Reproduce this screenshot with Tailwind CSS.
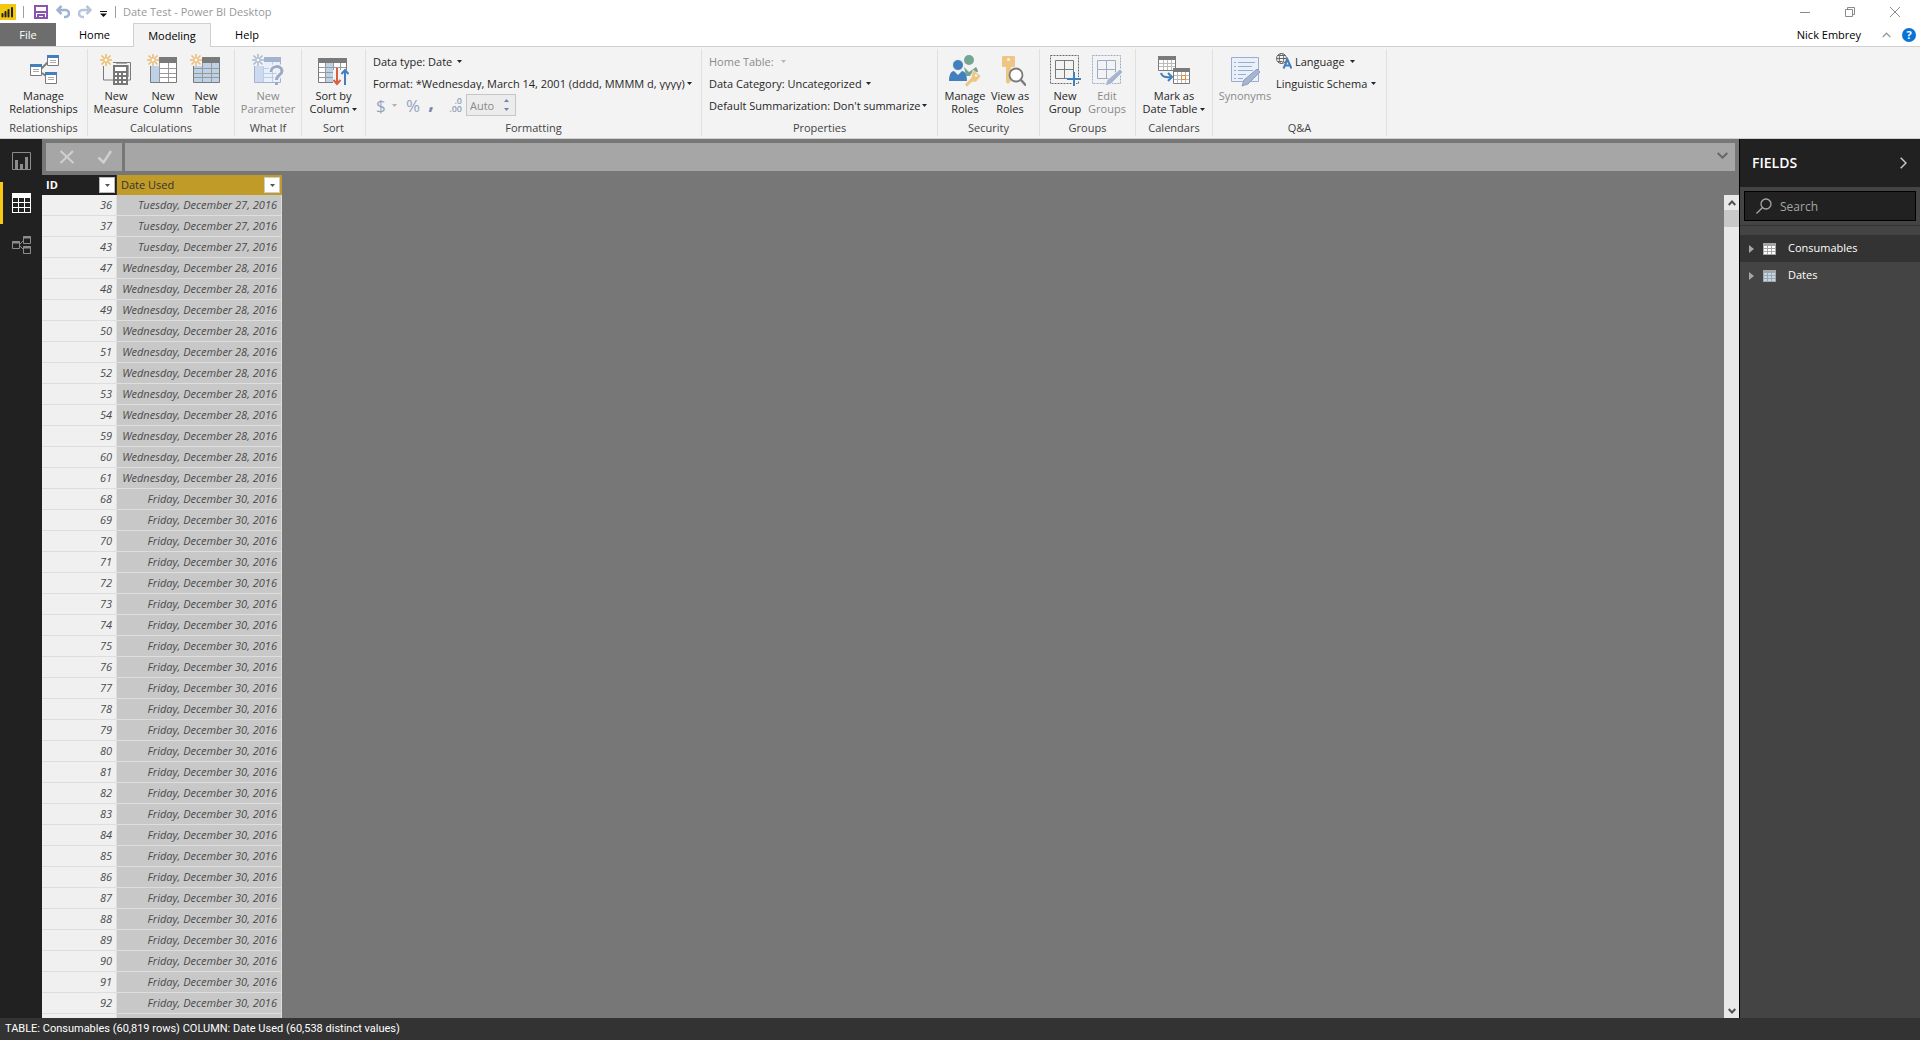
<!DOCTYPE html>
<html lang="en">
<head>
<meta charset="utf-8">
<title>Date Test - Power BI Desktop</title>
<script src="https://cdn.jsdelivr.net/npm/@tailwindcss/browser@4"></script>
</head>
<body class="flex h-screen flex-col overflow-hidden bg-white font-['Open_Sans','Noto_Sans',sans-serif] text-[11px] leading-[13px] text-[#262626]">

<svg class="hidden" aria-hidden="true">
  <defs>
    <symbol id="caret" viewBox="0 0 5 3"><path d="M0 0h5L2.500 3z" fill="currentColor"/></symbol>
    <symbol id="spark" viewBox="0 0 12 12"><path d="M6 0v12M0 6h12M1.500 1.500l9 9M10.500 1.500l-9 9" stroke="currentColor" stroke-width="1.500" fill="none"/><circle cx="6" cy="6" r="2" fill="#fff" stroke="currentColor"/></symbol>
  </defs>
</svg>

<!-- Title bar -->
<header class="flex h-[23px] shrink-0 items-center">
  <svg class="h-4 w-4" viewBox="0 0 16 16"><path d="M0 0h16v16H0z" fill="#f2c811"/><path d="M2.500 10v2.500M5.500 8v4.500M8.500 6v6.500M12 4v8.500" stroke="#222" stroke-width="2" stroke-linecap="round"/></svg>
  <span class="ml-[7px] h-3 w-px bg-[#a0a0a0]"></span>
  <button class="ml-[10px]" aria-label="Save"><svg class="h-[14px] w-[14px]" viewBox="0 0 14 14"><path d="M1 1h12v12H1z" fill="#fff" stroke="#8a55b0" stroke-width="2"/><path d="M2 7h10M4 13v-3h6v3" stroke="#8a55b0" stroke-width="2" fill="none"/></svg></button>
  <button class="ml-2" aria-label="Undo"><svg class="h-[14px] w-[14px]" viewBox="0 0 14 14" fill="none" stroke="#9db3d1" stroke-width="2.500"><path d="M5.500 1L1.500 5l4 4M2 5h7.500a3.500 3.500 0 0 1 0 7H8"/></svg></button>
  <button class="ml-2" aria-label="Redo"><svg class="h-[14px] w-[14px]" viewBox="0 0 14 14" fill="none" stroke="#b4c6d8" stroke-width="2.500"><path d="M8.500 1l4 4-4 4M12 5H4.500a3.500 3.500 0 0 0 0 7H6"/></svg></button>
  <button class="ml-2" aria-label="Customize toolbar"><svg class="mt-1 h-[6px] w-[7px]" viewBox="0 0 7 6"><path d="M0 0h7v1H0zM0 2.500h7L3.500 6z" fill="#111"/></svg></button>
  <span class="ml-2 h-3 w-px bg-[#a0a0a0]"></span>
  <h1 class="ml-[7px] text-[#999]">Date Test - Power BI Desktop</h1>
  <div class="ml-auto flex items-center gap-[35px] pr-5 text-[#8a8a8a]">
    <button aria-label="Minimize"><svg class="h-[10px] w-[10px]" viewBox="0 0 10 10"><path d="M0 5.500h10" stroke="currentColor"/></svg></button>
    <button aria-label="Restore"><svg class="h-[10px] w-[10px]" viewBox="0 0 10 10" fill="none" stroke="currentColor"><path d="M.5 2.500h7v7h-7zM2.500 2.500v-2h7v7h-2"/></svg></button>
    <button aria-label="Close"><svg class="h-[10px] w-[10px]" viewBox="0 0 10 10"><path d="M0 0l10 10M10 0L0 10" stroke="currentColor"/></svg></button>
  </div>
</header>

<!-- Ribbon tabs -->
<nav class="flex h-[24px] shrink-0 border-b border-[#d0d0d0] text-black">
  <button class="w-14 bg-[#6d6d6d] text-white">File</button>
  <button class="w-[77px]">Home</button>
  <button class="-mb-px h-[24px] w-[78px] border border-b-0 border-[#d0d0d0] bg-[#f3f3f3]">Modeling</button>
  <button class="w-[72px]">Help</button>
  <div class="ml-auto flex items-center pr-1">
    <span>Nick Embrey</span>
    <button class="ml-[21px]" aria-label="Collapse ribbon"><svg class="h-[6px] w-[9px]" viewBox="0 0 9 6"><path d="M.7 5L4.500 1.200 8.300 5" fill="none" stroke="#999" stroke-width="1.300"/></svg></button>
    <button class="ml-[11px] flex h-[14px] w-[14px] items-center justify-center rounded-full bg-[#0a74d6] text-[11px] font-bold text-white" aria-label="Help">?</button>
  </div>
</nav>

<!-- Ribbon -->
<section class="flex h-[92px] shrink-0 border-b border-[#d0d0d0] bg-[#f3f3f3]" aria-label="Modeling ribbon">

  <div class="my-[2px] flex w-[88px] flex-col border-r border-[#e0e0e0]">
    <div class="flex grow justify-center pt-1">
      <button class="flex flex-col items-center">
        <svg class="h-9 w-8" viewBox="0 0 32 36"><path d="M13 16l7-7M14 20l8 6" stroke="#7a7a7a" stroke-width="1.800"/><g fill="#fff" stroke="#7a7a7a"><path d="M19.500 3.500h11v9h-11zM2.500 12.500h11v10h-11zM17.500 20.500h11v10h-11z"/></g><path d="M19 2h12v3H19zM2 11h12v3H2zM17 19h12v3H17z" fill="#4180bd"/><path d="M22 7.500h6M22 9.500h6M5 16.500h6M5 18.500h6M20 24.500h6M20 26.500h6" stroke="#aaa"/></svg>
        <span>Manage<br>Relationships</span>
      </button>
    </div>
    <h2 class="h-[15px] text-center text-[#444]">Relationships</h2>
  </div>

  <div class="my-[2px] flex w-[147px] flex-col border-r border-[#e0e0e0]">
    <div class="flex grow pt-1 pl-1">
      <button class="flex w-12 flex-col items-center">
        <svg class="h-9 w-8" viewBox="0 0 32 36"><path d="M3.500 13v14h11M13 9.500h17.500V27H28" fill="none" stroke="#7a7a7a"/><path d="M16 10.500h11M28.500 12v12" stroke="#aaa"/><path d="M13 12h15v20H13z" fill="#777"/><path d="M15 14h11v4H15z" fill="#fff"/><path d="M15 20h2v2h-2zM19 20h2v2h-2zM23 20h3v2h-3zM15 24h2v2h-2zM19 24h2v2h-2zM23 24h3v2h-3zM15 28h2v2h-2zM19 28h2v2h-2zM23 28h3v2h-3z" fill="#fff"/><use href="#spark" x="0" y="1" width="12" height="12" color="#ecbc68"/></svg>
        <span>New<br>Measure</span>
      </button>
      <button class="flex w-[46px] flex-col items-center">
        <svg class="h-9 w-8" viewBox="0 0 32 36"><path d="M3.500 6.500h26v23h-26z" fill="#fff" stroke="#7a7a7a"/><path d="M4 10h8v19H4z" fill="#bdd2e6"/><path d="M3 4h27v6H3z" fill="#7a7a7a"/><path d="M12.500 10v19M21.500 10v19M12 15.500h17M12 20.500h17M12 24.500h17" stroke="#999"/><path d="M0 1h12v12H0z" fill="#f3f3f3"/><use href="#spark" x="0" y="1" width="12" height="12" color="#ecbc78"/></svg>
        <span>New<br>Column</span>
      </button>
      <button class="flex w-10 flex-col items-center">
        <svg class="h-9 w-8" viewBox="0 0 32 36"><path d="M3.500 6.500h26v23h-26z" fill="#bdd2e6" stroke="#7a7a7a"/><path d="M3 4h27v6H3z" fill="#7a7a7a"/><path d="M12.500 10v19M21.500 10v19M4 15.500h25M4 20.500h25M4 24.500h25" stroke="#999"/><path d="M0 1h12v12H0z" fill="#f3f3f3"/><use href="#spark" x="0" y="1" width="12" height="12" color="#ecbc78"/></svg>
        <span>New<br>Table</span>
      </button>
    </div>
    <h2 class="h-[15px] text-center text-[#444]">Calculations</h2>
  </div>

  <div class="my-[2px] flex w-[67px] flex-col border-r border-[#e0e0e0]">
    <div class="flex grow justify-center pt-1">
      <button class="flex flex-col items-center text-[#8a8a8a]" disabled>
        <svg class="h-9 w-8" viewBox="0 0 32 36"><path d="M2.500 6.500h26v23h-26z" fill="#e8f1fb" stroke="#a3b3cf"/><path d="M3 10h8v19H3z" fill="#cbdaf0"/><path d="M2 4h27v5H2z" fill="#a3b3cf"/><path d="M11.500 9v20M20.500 9v20M11 15.500h17M11 20.500h17M11 24.500h17" stroke="#c0cde0"/><path d="M0 1h12v12H0z" fill="#f3f3f3"/><use href="#spark" x="0" y="1" width="12" height="12" color="#a9b8d2"/><path d="M19 19c0-7 11-7 11-1 0 4-5.500 4-5.500 9" fill="none" stroke="#f3f3f3" stroke-width="6"/><path d="M19 19c0-7 11-7 11-1 0 4-5.500 4-5.500 9" fill="none" stroke="#9baac8" stroke-width="3"/><path d="M23 29h3v3h-3z" fill="#9baac8"/></svg>
        <span>New<br>Parameter</span>
      </button>
    </div>
    <h2 class="h-[15px] text-center text-[#444]">What If</h2>
  </div>

  <div class="my-[2px] flex w-16 flex-col border-r border-[#e0e0e0]">
    <div class="flex grow justify-center pt-1">
      <button class="flex flex-col items-center">
        <svg class="h-9 w-8" viewBox="0 0 32 36"><path d="M1.500 6.500h28v23h-28z" fill="#fff" stroke="#7a7a7a"/><path d="M9 10h7v19H9z" fill="#bdd2e6"/><path d="M1 5h29v5H1z" fill="#7a7a7a"/><path d="M8.500 10v19M16.500 10v19M23.500 10v19M2 14.500h27M2 19.500h27M2 24.500h27" stroke="#999"/><path d="M16 17h16v16H16z" fill="#f3f3f3"/><path d="M20 15v16M16.500 27l3.500 4 3.500-4" fill="none" stroke="#d5603f" stroke-width="2"/><path d="M28 32V17M24.500 21l3.500-4 3.500 4" fill="none" stroke="#4180bd" stroke-width="2"/></svg>
        <span class="whitespace-nowrap">Sort by<br>Column <svg class="mb-[2px] inline h-[3px] w-[5px]"><use href="#caret"/></svg></span>
      </button>
    </div>
    <h2 class="h-[15px] text-center text-[#444]">Sort</h2>
  </div>

  <div class="my-[2px] flex w-[336px] flex-col border-r border-[#e0e0e0]">
    <div class="flex grow flex-col pt-px pl-[7px]">
      <div class="flex h-[22px] items-center"><label for="dtype">Data type:&nbsp;</label><select id="dtype" class="appearance-none"><option>Date</option></select><svg class="ml-1 h-[3px] w-[5px]"><use href="#caret"/></svg></div>
      <div class="flex h-[22px] items-center"><label for="fmt">Format:&nbsp;</label><select id="fmt" class="appearance-none"><option>*Wednesday, March 14, 2001 (dddd, MMMM d, yyyy)</option></select><svg class="ml-px h-[3px] w-[5px]"><use href="#caret"/></svg></div>
      <div class="flex h-[22px] items-center text-[#93a3c0]">
        <button class="flex w-7 items-center gap-[6px] pl-[3px] text-[17px]" aria-label="Currency format" disabled>$<svg class="h-[3px] w-[5px] shrink-0 text-[#b0b0b0]"><use href="#caret"/></svg></button>
        <button class="w-6 text-[17px]" aria-label="Percentage format" disabled>%</button>
        <button class="w-3 pb-2 text-[20px] font-bold text-[#7488ad]" aria-label="Thousands separator" disabled>,</button>
        <label for="dec" class="ml-[9px] flex w-4 flex-col items-end text-[9px] leading-[8px] font-semibold text-[#909fb8]"><span>.0</span><span>.00</span></label>
        <div class="ml-1 flex h-[22px] w-[50px] items-center border border-[#c6c6c6] bg-[#ececec] pr-[6px]">
          <input id="dec" class="w-9 min-w-0 grow pl-[3px] text-[11px] text-[#8a8a8a]" value="Auto" disabled>
          <div class="flex flex-col gap-[6px] text-[#6f86ac]"><button aria-label="More decimals" disabled><svg class="block h-[3px] w-[5px] rotate-180"><use href="#caret"/></svg></button><button aria-label="Fewer decimals" disabled><svg class="block h-[3px] w-[5px]"><use href="#caret"/></svg></button></div>
        </div>
      </div>
    </div>
    <h2 class="h-[15px] text-center text-[#444]">Formatting</h2>
  </div>

  <div class="my-[2px] flex w-[236px] flex-col border-r border-[#e0e0e0]">
    <div class="flex grow flex-col pt-px pl-[7px]">
      <div class="flex h-[22px] items-center text-[#8a8a8a]"><label for="home">Home Table:</label><select id="home" class="w-[7px] appearance-none" disabled><option></option></select><svg class="h-[3px] w-[5px] text-[#b5b5b5]"><use href="#caret"/></svg></div>
      <div class="flex h-[22px] items-center"><label for="cat">Data Category:&nbsp;</label><select id="cat" class="appearance-none"><option>Uncategorized</option></select><svg class="ml-1 h-[3px] w-[5px]"><use href="#caret"/></svg></div>
      <div class="flex h-[22px] items-center"><label for="sum">Default Summarization:&nbsp;</label><select id="sum" class="appearance-none"><option>Don't summarize</option></select><svg class="ml-px h-[3px] w-[5px]"><use href="#caret"/></svg></div>
    </div>
    <h2 class="h-[15px] text-center text-[#444]">Properties</h2>
  </div>

  <div class="my-[2px] flex w-[102px] flex-col border-r border-[#e0e0e0]">
    <div class="flex grow pt-1 pl-1">
      <button class="flex w-[46px] flex-col items-center">
        <svg class="h-9 w-8" viewBox="0 0 32 36"><circle cx="20" cy="7" r="5" fill="#72a592"/><path d="M15 14l5 5 7-5q2 2 2 5l-6 1-2 3h-4z" fill="#72a592"/><path d="M18 13l3 4 3-4z" fill="#f3f3f3"/><circle cx="9" cy="12" r="5.500" fill="#4180bd" stroke="#f3f3f3"/><path d="M0 28c0-6 2-10 5-10l4 4 4-4c3 0 5 4 5 10z" fill="#4180bd"/><path d="M24 17l8 6-5 6h-4l-5 5-2-2v-1l6-6z" fill="#eec682" stroke="#f3f3f3" stroke-width=".6"/><circle cx="27" cy="22.500" r="1.300" fill="#f3f3f3"/></svg>
        <span>Manage<br>Roles</span>
      </button>
      <button class="flex w-11 flex-col items-center">
        <svg class="h-9 w-8" viewBox="0 0 32 36"><path d="M9 3h11q1 0 1 1v9q0 1-1 1h-3v14l-3 3-2-2V14H9q-1 0-1-1V4q0-1 1-1z" fill="#eec682"/><circle cx="14.500" cy="6.500" r="1.500" fill="#f3f3f3"/><circle cx="22" cy="22" r="6.500" fill="#fff" stroke="#7a7a7a" stroke-width="1.800"/><path d="M26.500 26.500l5.500 6" stroke="#7a7a7a" stroke-width="2.500"/></svg>
        <span class="whitespace-nowrap">View as<br>Roles</span>
      </button>
    </div>
    <h2 class="h-[15px] text-center text-[#444]">Security</h2>
  </div>

  <div class="my-[2px] flex w-24 flex-col border-r border-[#e0e0e0]">
    <div class="flex grow pt-1 pl-1">
      <button class="flex w-[42px] flex-col items-center">
        <svg class="h-9 w-8" viewBox="0 0 32 36"><path d="M1.500 2.500h28v28h-28z" fill="none" stroke="#6a6a6a" stroke-dasharray="2 1"/><path d="M6.500 7.500h18v18h-18zM15.500 7.500v18M6.500 16.500h18" fill="none" stroke="#7a7a7a"/><path d="M23 19h4v14h-4zM18 24h13v4H18z" fill="#f3f3f3"/><path d="M25 19v14M18 26h14" stroke="#4180bd" stroke-width="2"/></svg>
        <span>New<br>Group</span>
      </button>
      <button class="flex w-[42px] flex-col items-center text-[#8a8a8a]" disabled>
        <svg class="h-9 w-8" viewBox="0 0 32 36"><path d="M1.500 2.500h28v28h-28z" fill="none" stroke="#9dadc9" stroke-dasharray="2 1"/><path d="M6.500 7.500h18v18h-18zM15.500 7.500v18M6.500 16.500h18" fill="none" stroke="#9dadc9"/><path d="M14 33l2-6 13-11 3 3-12 12z" fill="#a6b5d0" stroke="#f3f3f3"/></svg>
        <span>Edit<br>Groups</span>
      </button>
    </div>
    <h2 class="h-[15px] text-center text-[#444]">Groups</h2>
  </div>

  <div class="my-[2px] flex w-[77px] flex-col border-r border-[#e0e0e0]">
    <div class="flex grow justify-center pt-1">
      <button class="flex flex-col items-center">
        <svg class="h-9 w-8" viewBox="0 0 32 36"><path d="M.5 4.500h17v13H.5zM15.500 17.500h16v13h-16z" fill="#fff" stroke="#7a7a7a"/><path d="M0 3h18v4H0zM15 15h17v4H15z" fill="#7a7a7a"/><path d="M5.500 7v10M9.500 7v10M13.500 7v10M1 10.500h16M1 13.500h16M19.500 19v11M23.500 19v11M27.500 19v11M16 22.500h15M16 26.500h15" stroke="#bbb"/><path d="M23.500 22.500h4v4h-4z" fill="#fff" stroke="#e8833a"/><path d="M3 20c1 4 5 5 11 4M10 20l4 4-4 4" fill="none" stroke="#4180bd" stroke-width="2"/></svg>
        <span class="whitespace-nowrap">Mark as<br>Date Table <svg class="mb-[2px] inline h-[3px] w-[5px]"><use href="#caret"/></svg></span>
      </button>
    </div>
    <h2 class="h-[15px] text-center text-[#444]">Calendars</h2>
  </div>

  <div class="my-[2px] flex w-[174px] flex-col border-r border-[#e0e0e0]">
    <div class="flex grow pl-1">
      <button class="flex w-[56px] flex-col items-center pt-1 text-[#8a8a8a]" disabled>
        <svg class="h-9 w-8" viewBox="0 0 32 36"><path d="M2.500 4.500h27v24h-27z" fill="#e8f1fb" stroke="#9dadc9"/><path d="M5 9.500h2M9 9.500h17M5 13.500h2M9 13.500h14M5 17.500h2M9 17.500h15M5 21.500h2M9 21.500h8M5 25.500h2M9 25.500h5" stroke="#9dadc9"/><path d="M13 33l2-6 13-11 3 3-12 12z" fill="#a6b5d0" stroke="#8d9dbb"/></svg>
        <span>Synonyms</span>
      </button>
      <div class="flex flex-col pt-px pl-[3px]">
        <button class="flex h-[22px] items-center gap-[3px]"><svg class="h-4 w-4" viewBox="0 0 16 16"><g fill="none" stroke="#666"><circle cx="5.500" cy="5.500" r="5"/><ellipse cx="5.500" cy="5.500" rx="2.200" ry="5"/><path d="M.5 5.500h10M1.500 2.500h8M1.500 8.500h5"/></g><path d="M7.500 15.500L11.500 6.500l4 9M9 12.500h5" fill="none" stroke="#4180bd" stroke-width="2"/></svg>Language <svg class="ml-[2px] h-[3px] w-[5px]"><use href="#caret"/></svg></button>
        <button class="flex h-[22px] items-center gap-1 whitespace-nowrap">Linguistic Schema <svg class="h-[3px] w-[5px]"><use href="#caret"/></svg></button>
      </div>
    </div>
    <h2 class="h-[15px] text-center text-[#444]">Q&amp;A</h2>
  </div>
</section>

<!-- Workspace -->
<main class="flex min-h-0 grow">
  <nav class="flex w-[42px] shrink-0 flex-col bg-[#212121] pt-px" aria-label="Views">
    <button class="flex h-[42px] items-center pl-3" aria-label="Report"><svg class="h-[19px] w-[19px]" viewBox="0 0 19 19"><path d="M.5.500h18v17H.5z" fill="none" stroke="#8c8c8c"/><path d="M3 8h3v9H3zM8 12h3v5H8zM13 5h3v12h-3z" fill="#8c8c8c"/></svg></button>
    <button class="flex h-[42px] items-center border-l-[3px] border-[#f8c813] pl-[9px]" aria-label="Data"><svg class="h-5 w-[19px]" viewBox="0 0 19 20"><path d="M0 0h19v20H0z" fill="#fff"/><path d="M1 5h5v4H1zM7 5h5v4H7zM13 5h5v4h-5zM1 10h5v4H1zM7 10h5v4H7zM13 10h5v4h-5zM1 15h5v4H1zM7 15h5v4H7zM13 15h5v4h-5z" fill="#212121"/></svg></button>
    <button class="flex h-[42px] items-center pl-3" aria-label="Relationships"><svg class="h-[19px] w-[19px]" viewBox="0 0 19 19" fill="none" stroke="#8c8c8c"><path d="M.5 5.500h7v7h-7zM11.500.500h7v7h-7zM11.500 10.500h7v7h-7zM8 8l3-3M8 10l3 3"/><path d="M0 6.500h8M11 1.500h8M11 11.500h8" stroke-width="2"/></svg></button>
  </nav>

  <section class="flex min-w-0 grow flex-col bg-[#777]">
    <div class="flex gap-[3px] pt-1 pr-1 pl-1">
      <div class="flex h-7 w-[76px] shrink-0 items-center gap-[22px] bg-[#a6a6a6] pl-[13px]">
        <button aria-label="Cancel"><svg class="h-[14px] w-4" viewBox="0 0 16 14"><path d="M1.500 1l13 12M14 1L1.500 13" stroke="#cfcfcf" stroke-width="2.200"/></svg></button>
        <button aria-label="Commit"><svg class="h-[14px] w-4" viewBox="0 0 16 14"><path d="M1.500 7.500l5 5L14 1" fill="none" stroke="#cfcfcf" stroke-width="2.500"/></svg></button>
      </div>
      <div class="flex h-7 grow items-center bg-[#a6a6a6] pr-[7px]">
        <input class="h-full min-w-0 grow px-2 outline-none" aria-label="Formula">
        <button class="pb-1" aria-label="Expand formula bar"><svg class="h-[7px] w-[11px]" viewBox="0 0 11 7"><path d="M.7 1l4.800 4.600L10.300 1" fill="none" stroke="#666" stroke-width="2"/></svg></button>
      </div>
    </div>
    <div class="mt-1 flex min-h-0 grow">
      <div class="min-w-0 grow overflow-hidden">
        <table class="w-[240px] table-fixed border-separate border-spacing-0">
          <thead>
            <tr class="h-5">
              <th class="w-[75px] border-r border-[#333] bg-[#212121] p-0 text-left text-white"><div class="flex items-center justify-between pr-px pl-1"><span class="pb-[2px]">ID</span><button class="flex h-4 w-4 items-center justify-center border border-[#bbb] bg-white text-[#555]" aria-label="Filter ID"><svg class="h-[3px] w-[5px]"><use href="#caret"/></svg></button></div></th>
              <th class="bg-[#c09b28] p-0 text-left font-medium text-[#333]"><div class="flex items-center justify-between pr-[2px] pl-1"><span class="pb-[2px]">Date Used</span><button class="flex h-4 w-4 items-center justify-center border border-[#ccc] bg-white text-[#555]" aria-label="Filter Date Used"><svg class="h-[3px] w-[5px]"><use href="#caret"/></svg></button></div></th>
            </tr>
          </thead>
          <tbody id="rows" class="text-right text-[#4a4a4a] italic"></tbody>
        </table>
      </div>
      <div class="mt-5 flex w-[15px] shrink-0 flex-col items-center bg-[#e9e9e9]">
        <button class="flex h-[15px] items-center" aria-label="Scroll up"><svg class="h-[6px] w-2" viewBox="0 0 8 6"><path d="M.7 5L4 1.500 7.300 5" fill="none" stroke="#505050" stroke-width="2"/></svg></button>
        <div class="h-[17px] w-full bg-[#c8c8c8]"></div>
        <button class="mt-auto flex h-[15px] items-center" aria-label="Scroll down"><svg class="h-[6px] w-2" viewBox="0 0 8 6"><path d="M.7 1L4 4.500 7.300 1" fill="none" stroke="#505050" stroke-width="2"/></svg></button>
      </div>
    </div>
  </section>

  <aside class="flex w-[181px] shrink-0 flex-col border-l border-black bg-[#444] text-white">
    <div class="flex h-12 shrink-0 items-center justify-between bg-[#212121] pr-[13px] pl-3">
      <h2 class="pb-[2px] text-[14px] font-semibold">FIELDS</h2>
      <button aria-label="Collapse fields"><svg class="h-3 w-[7px]" viewBox="0 0 7 12"><path d="M.7.700L6 6 .7 11.300" fill="none" stroke="#c8c8c8" stroke-width="1.500"/></svg></button>
    </div>
    <div class="border-b border-[#333] p-1">
      <label class="flex h-[30px] items-center gap-2 border border-black bg-[#212121] pl-[11px]">
        <svg class="h-4 w-4 shrink-0" viewBox="0 0 16 16" fill="none" stroke="#a6a6a6" stroke-width="1.300"><circle cx="10" cy="6" r="5"/><path d="M6.300 9.700L.5 15.500"/></svg>
        <input type="search" aria-label="Search fields" placeholder="Search" class="w-0 grow text-[12px] outline-none placeholder:text-[#a6a6a6]">
      </label>
    </div>
    <ul class="mt-[9px] font-medium">
      <li><button class="flex h-[27px] w-full items-center bg-[#333] pl-[9px]"><svg class="h-2 w-[5px]" viewBox="0 0 5 8"><path d="M0 0l5 4-5 4z" fill="#a6a6a6"/></svg><svg class="ml-[9px] h-3 w-[13px]" viewBox="0 0 13 12"><path d="M0 0h13v12H0z" fill="#a6a6a6"/><path d="M1 3h3v2H1zM5 3h3v2H5zM9 3h3v2H9zM1 6h3v2H1zM5 6h3v2H5zM9 6h3v2H9zM1 9h3v2H1zM5 9h3v2H5zM9 9h3v2H9z" fill="#fff"/></svg><span class="ml-3 pb-[2px]">Consumables</span></button></li>
      <li><button class="flex h-[27px] w-full items-center pl-[9px]"><svg class="h-2 w-[5px]" viewBox="0 0 5 8"><path d="M0 0l5 4-5 4z" fill="#a6a6a6"/></svg><svg class="ml-[9px] h-3 w-[13px]" viewBox="0 0 13 12"><path d="M0 0h13v12H0z" fill="#a6a6a6"/><path d="M1 3h3v2H1zM5 3h3v2H5zM9 3h3v2H9zM1 6h3v2H1zM5 6h3v2H5zM9 6h3v2H9zM1 9h3v2H1zM5 9h3v2H5zM9 9h3v2H9z" fill="#bdd7ee"/></svg><span class="ml-3 pb-[2px]">Dates</span></button></li>
    </ul>
  </aside>
</main>

<footer class="flex h-[22px] shrink-0 items-center bg-[#333] pb-px pl-[5px] font-['Roboto','Open_Sans',sans-serif] text-white">TABLE: Consumables (60,819 rows) COLUMN: Date Used (60,538 distinct values)</footer>

<script>
  const ranges = [
    [36, 37, "Tuesday, December 27, 2016"],
    [43, 43, "Tuesday, December 27, 2016"],
    [47, 54, "Wednesday, December 28, 2016"],
    [59, 61, "Wednesday, December 28, 2016"],
    [68, 92, "Friday, December 30, 2016"]
  ];
  const row = (id, date) => `<tr class="h-[21px]"><td class="border-r border-b border-[#dedede] bg-[#f0f0f0] p-0 pr-1 pb-px">${id}</td><td class="border-r border-b border-[#dedede] bg-[#c8c8c8] p-0 pr-1 pb-px whitespace-nowrap">${date}</td></tr>`;
  let html = "";
  for (const [from, to, date] of ranges) {
    for (let id = from; id <= to; id++) html += row(id, date);
  }
  html += row("", "");
  document.getElementById("rows").innerHTML = html;
</script>
</body>
</html>
